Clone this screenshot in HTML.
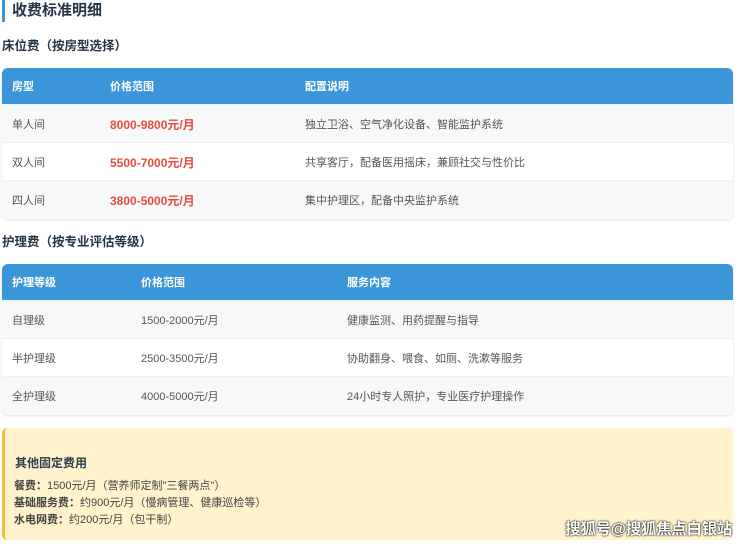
<!DOCTYPE html>
<html><head><meta charset="utf-8"><style>
*{margin:0;padding:0;box-sizing:border-box}
body{width:740px;height:544px;background:#fff;position:relative;overflow:hidden;font-family:"Liberation Sans","Noto Sans CJK SC",sans-serif;color:#333}
.abs{position:absolute}
.bar{left:2px;top:0;width:3px;height:22px;background:#3a96d8}
.h1{left:12px;top:1px;font-size:15px;font-weight:bold;color:#253545;line-height:20px}
.h2{left:2px;font-size:12.5px;font-weight:bold;color:#253545;line-height:18px}
.tbl{left:2px;width:731px;border-radius:6px;overflow:hidden;box-shadow:0 1px 3px rgba(0,0,0,.12)}
.row{position:relative;height:38px;font-size:11px;line-height:40px;border-bottom:1px solid #eef0f2;color:#555}
.row span{position:absolute;top:0}
.hd{background:#3a96d8;color:#fff;font-weight:bold;height:37px;line-height:39px}
.odd{background:#f7f8fa}
.ev{background:#fff}
.red{color:#e74c3c;font-weight:bold;font-size:12px}
.note{left:2px;top:428px;width:731px;height:112px;background:#fff2cc;border-left:3px solid #f5c030;border-radius:5px}
.note .t{position:absolute;left:10px;top:26px;font-size:12px;font-weight:bold;color:#2c3e50}
.note .l{position:absolute;left:9px;font-size:11px;line-height:16px;color:#444}
.wm{right:8px;top:517px;font-size:15.5px;font-weight:bold;color:#fff;text-shadow:0 0 2px #000,0 0 1px #000;letter-spacing:-0.3px}
</style></head><body>
<div class="abs bar"></div>
<div class="abs h1">收费标准明细</div>
<div class="abs h2" style="top:37px">床位费（按房型选择）</div>
<div class="abs tbl" style="top:68px">
 <div class="row hd"><span style="left:10px">房型</span><span style="left:108px">价格范围</span><span style="left:303px">配置说明</span></div>
 <div class="row odd"><span style="left:10px">单人间</span><span class="red" style="left:108px">8000-9800元/月</span><span style="left:303px">独立卫浴、空气净化设备、智能监护系统</span></div>
 <div class="row ev"><span style="left:10px">双人间</span><span class="red" style="left:108px">5500-7000元/月</span><span style="left:303px">共享客厅，配备医用摇床，兼顾社交与性价比</span></div>
 <div class="row odd" style="border:none"><span style="left:10px">四人间</span><span class="red" style="left:108px">3800-5000元/月</span><span style="left:303px">集中护理区，配备中央监护系统</span></div>
</div>
<div class="abs h2" style="top:233px">护理费（按专业评估等级）</div>
<div class="abs tbl" style="top:264px">
 <div class="row hd"><span style="left:10px">护理等级</span><span style="left:139px">价格范围</span><span style="left:345px">服务内容</span></div>
 <div class="row odd"><span style="left:10px">自理级</span><span style="left:139px">1500-2000元/月</span><span style="left:345px">健康监测、用药提醒与指导</span></div>
 <div class="row ev"><span style="left:10px">半护理级</span><span style="left:139px">2500-3500元/月</span><span style="left:345px">协助翻身、喂食、如厕、洗漱等服务</span></div>
 <div class="row odd" style="border:none"><span style="left:10px">全护理级</span><span style="left:139px">4000-5000元/月</span><span style="left:345px">24小时专人照护，专业医疗护理操作</span></div>
</div>
<div class="abs note">
 <div class="t">其他固定费用</div>
 <div class="l" style="top:50px"><b>餐费：</b>1500元/月（营养师定制"三餐两点"）</div>
 <div class="l" style="top:67px"><b>基础服务费：</b>约900元/月（慢病管理、健康巡检等）</div>
 <div class="l" style="top:84px"><b>水电网费：</b>约200元/月（包干制）</div>
</div>
<div class="abs wm">搜狐号@搜狐焦点白银站</div>
</body></html>
